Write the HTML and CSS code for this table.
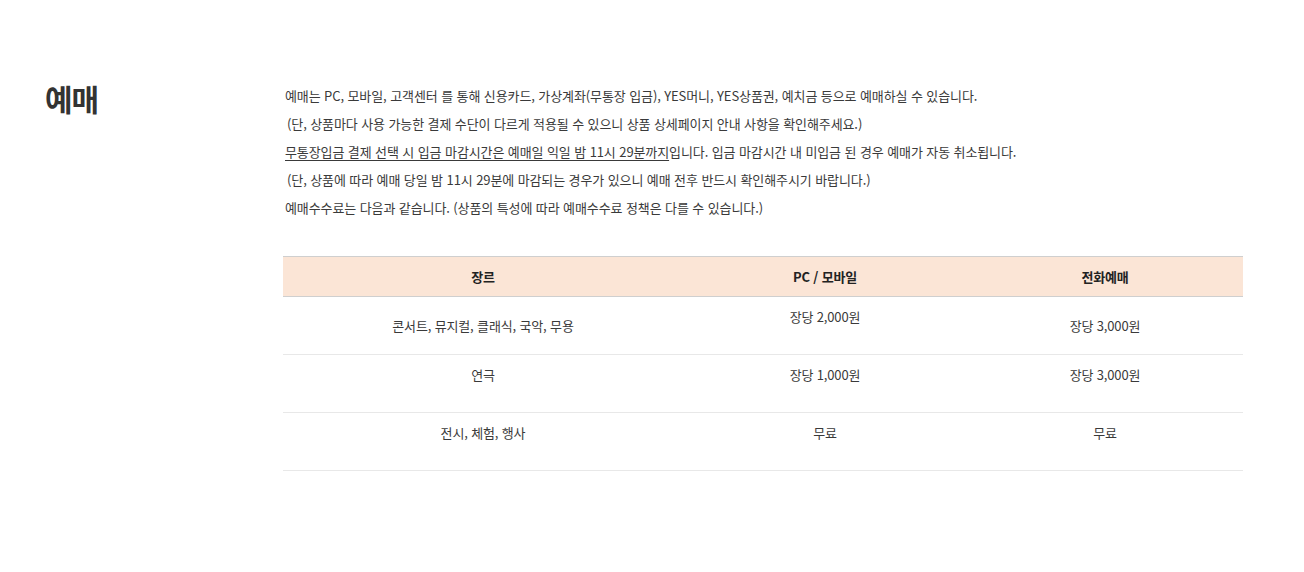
FILE: index.html
```html
<!DOCTYPE html>
<html lang="ko">
<head>
<meta charset="utf-8">
<title>예매</title>
<link rel="stylesheet" href="styles.css">
</head>
<body>
<section class="pay">
  <h2 class="pay-title">예매</h2>
  <div class="pay-body">
    <ul class="pay-notes">
      <li>예매는 PC, 모바일, 고객센터 를 통해 신용카드, 가상계좌(무통장 입금), YES머니, YES상품권, 예치금 등으로 예매하실 수 있습니다.</li>
      <li class="sub">(단, 상품마다 사용 가능한 결제 수단이 다르게 적용될 수 있으니 상품 상세페이지 안내 사항을 확인해주세요.)</li>
      <li><span class="uline">무통장입금 결제 선택 시 입금 마감시간은 예매일 익일 밤 11시 29분까지</span>입니다. 입금 마감시간 내 미입금 된 경우 예매가 자동 취소됩니다.</li>
      <li class="sub">(단, 상품에 따라 예매 당일 밤 11시 29분에 마감되는 경우가 있으니 예매 전후 반드시 확인해주시기 바랍니다.)</li>
      <li>예매수수료는 다음과 같습니다. (상품의 특성에 따라 예매수수료 정책은 다를 수 있습니다.)</li>
    </ul>
    <table class="fee">
      <thead>
        <tr><th class="c1">장르</th><th class="c2">PC / 모바일</th><th class="c3">전화예매</th></tr>
      </thead>
      <tbody>
        <tr><td class="mid">콘서트, 뮤지컬, 클래식, 국악, 무용</td><td>장당 2,000원</td><td class="mid">장당 3,000원</td></tr>
        <tr><td>연극</td><td>장당 1,000원</td><td>장당 3,000원</td></tr>
        <tr><td>전시, 체험, 행사</td><td>무료</td><td>무료</td></tr>
      </tbody>
    </table>
  </div>
</section>
</body>
</html>
```
FILE: styles.css
```css
html, body {
  margin: 0;
  padding: 0;
  background: #fff;
}
body {
  font-family: "Noto Sans CJK KR", "Noto Sans", sans-serif;
  color: #333;
}
.pay {
  display: flex;
  align-items: flex-start;
  padding: 82px 0 0 45px;
}
.pay-title {
  flex: 0 0 238px;
  margin: 0;
  font-size: 30px;
  line-height: 30px;
  font-weight: 700;
  color: #333;
  letter-spacing: -1px;
  padding-top: 1px;
}
.pay-body {
  width: 960px;
}
.pay-notes {
  list-style: none;
  margin: 0;
  padding: 0 0 0 2px;
  font-size: 13px;
  line-height: 28px;
  letter-spacing: -0.1px;
  color: #3a3a3a;
}
.pay-notes .sub {
  padding-left: 2px;
}
.uline {
  text-decoration: underline;
  text-underline-offset: 3px;
}
.fee {
  width: 960px;
  margin-top: 34px;
  border-collapse: collapse;
  font-size: 13px;
  letter-spacing: -0.15px;
}
.fee th {
  height: 39px;
  padding: 0;
  background: #fbe5d6;
  border-top: 1px solid #cfcfcf;
  border-bottom: 1px solid #cfcfcf;
  font-weight: 700;
  color: #222;
  text-align: center;
  vertical-align: middle;
}
.fee .c1 { width: 400px; }
.fee .c2 { width: 284px; }
.fee .c3 { width: 276px; }
.fee td {
  height: 37px;
  padding: 10px 0 10px;
  border-bottom: 1px solid #e8e8e8;
  text-align: center;
  vertical-align: top;
  line-height: 20px;
  color: #3a3a3a;
}
.fee td.mid {
  vertical-align: middle;
}
```
